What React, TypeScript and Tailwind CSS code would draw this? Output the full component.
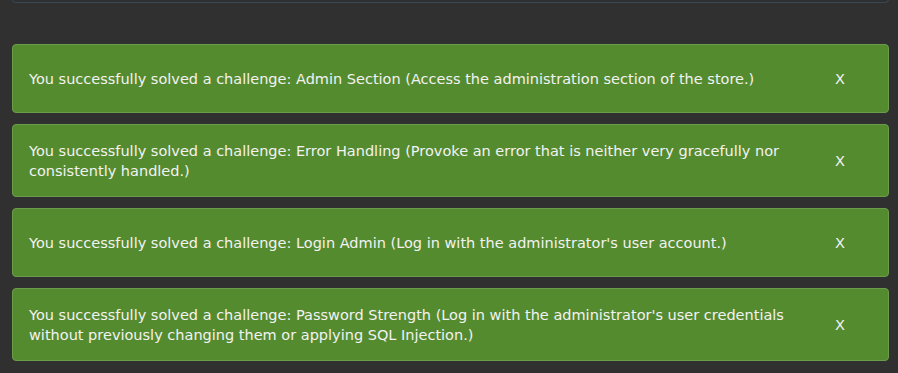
const notes = [
  "You successfully solved a challenge: Admin Section (Access the administration section of the store.)",
  "You successfully solved a challenge: Error Handling (Provoke an error that is neither very gracefully nor consistently handled.)",
  "You successfully solved a challenge: Login Admin (Log in with the administrator's user account.)",
  "You successfully solved a challenge: Password Strength (Log in with the administrator's user credentials without previously changing them or applying SQL Injection.)",
];

export default function App() {
  return (
    <div className="w-[898px] h-[373px] overflow-hidden bg-[#303030] font-['DejaVu_Sans',sans-serif]">
      <div className="h-[45px] pl-3 pr-[9px]">
        <div className="h-[4px] -mt-[1px] rounded-b-[4px] bg-[#2d2f31] border border-t-0 border-[#3b4852]" />
      </div>
      <div className="flex flex-col gap-[11px] pl-3 pr-[9px]">
        {notes.map((n) => (
          <div
            key={n}
            className="flex items-center min-h-[69px] pt-4 pb-[15px] pl-4 pr-4 rounded-[4px] bg-[#558b2f] border border-[#6b9c4a] text-[#f2f2f2] text-[14.5px] leading-[20px]"
          >
            <span className="flex-1 pr-2">{n}</span>
            <button className="w-[64px] shrink-0 text-center text-[14.5px] text-[#f2f2f2]">X</button>
          </div>
        ))}
      </div>
    </div>
  );
}
